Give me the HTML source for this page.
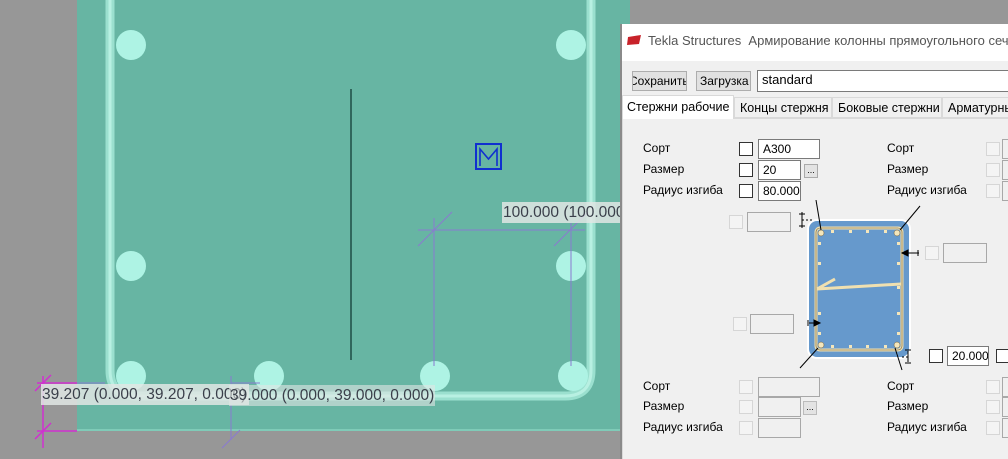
<!DOCTYPE html>
<html><head><meta charset="utf-8"><style>
*{margin:0;padding:0;box-sizing:border-box}
body{width:1008px;height:459px;overflow:hidden;background:#979797;position:relative;font-family:"Liberation Sans","DejaVu Sans",sans-serif}
.a{position:absolute;white-space:nowrap}
.lbl{position:absolute;font-size:12px;color:#000;white-space:nowrap}
.cb{position:absolute;width:14px;height:14px;border:1px solid #333;background:#fff}
.cbd{position:absolute;width:14px;height:14px;border:1px solid #d6d6d6;background:#f4f4f4}
.in{position:absolute;height:20px;border:1px solid #7a7a7a;background:#fff;font-size:12px;padding:2px 4px;line-height:14px;white-space:nowrap;overflow:hidden}
.ind{position:absolute;height:20px;border:1px solid #a8a8a8;background:#f0f0f0}
.dots{position:absolute;width:14px;height:14px;border:1px solid #aaa;background:#e3e3e3;font-size:9px;text-align:center;line-height:10px}
.coord{position:absolute;background:rgba(225,230,228,.85);color:#3a3f4a;font-size:15.5px;height:21px;line-height:21px;padding:0 1px;white-space:nowrap}
.tab{font-size:12.5px;overflow:hidden}
</style></head><body>
<svg class="a" style="left:0;top:0" width="630" height="459">
<rect x="77" y="0" width="553" height="431" fill="#67b5a3"/>
<rect x="77" y="429" width="553" height="2" fill="#7fcbb8"/>
<path d="M110 0 V370 Q110 396 136 396 H565 Q591 396 591 370 V0" fill="none" stroke="#9be0cf" stroke-width="9"/>
<path d="M110 0 V370 Q110 396 136 396 H565 Q591 396 591 370 V0" fill="none" stroke="#b8f0e2" stroke-width="3"/>
<g fill="#aef3e4">
<circle cx="131" cy="45" r="15"/><circle cx="571" cy="45" r="15"/>
<circle cx="131" cy="266" r="15"/><circle cx="571" cy="266" r="15"/>
<circle cx="131" cy="376" r="15"/><circle cx="269" cy="376" r="15"/><circle cx="435" cy="376" r="15"/><circle cx="573" cy="376" r="15"/>
</g>
<line x1="351" y1="89" x2="351" y2="360" stroke="#1f4d44" stroke-width="1.5"/>
<rect x="476" y="144" width="25" height="25" fill="none" stroke="#1030d0" stroke-width="2"/>
<path d="M480 166 V149 L488.5 159 L497 149 V166" fill="none" stroke="#1030d0" stroke-width="1.6"/>
<g stroke="#8a7ad0" stroke-width="1">
<line x1="418" y1="230" x2="585" y2="230"/><line x1="434" y1="218" x2="434" y2="366"/><line x1="571" y1="222" x2="571" y2="366"/>
<line x1="418" y1="246" x2="452" y2="212"/><line x1="554" y1="246" x2="588" y2="212"/>
<line x1="77" y1="383" x2="105" y2="383"/><line x1="231" y1="383" x2="260" y2="383"/>
<line x1="231" y1="376" x2="231" y2="440"/>
<line x1="222" y1="448" x2="240" y2="430"/>
</g>
<g stroke="#d030d0" stroke-width="1.5">
<line x1="43" y1="376" x2="43" y2="448"/>
<line x1="37" y1="383" x2="77" y2="383"/><line x1="37" y1="431" x2="77" y2="431"/>
<line x1="35" y1="391" x2="51" y2="375"/><line x1="35" y1="439" x2="51" y2="423"/>
</g>
</svg>
<div class="coord" style="left:41px;top:384px;width:208px;overflow:hidden">39.207 (0.000, 39.207, 0.000)</div>
<div class="coord" style="left:229px;top:385px;background:rgba(225,230,228,.6)">39.000 (0.000, 39.000, 0.000)</div>
<div class="coord" style="left:502px;top:202px">100.000 (100.000</div>

<div class="a" style="left:620px;top:24px;width:388px;height:435px;background:#f0f0f0;border-left:2px solid #8a8a8a"></div>
<div class="a" style="left:622px;top:24px;width:386px;height:37px;background:#fff"></div>
<svg class="a" style="left:626px;top:34px" width="16" height="12"><path d="M2 3 L15 1 L13 10 L1 11 Z" fill="#c8222a"/></svg>
<div class="lbl" style="left:648px;top:33px;font-size:13px;color:#555">Tekla Structures&nbsp; Армирование колонны прямоугольного сечения</div>
<div class="a" style="left:632px;top:71px;width:55px;height:20px;background:#e1e1e1;border:1px solid #adadad;font-size:12px;line-height:18px;overflow:hidden;text-indent:-4px">Сохранить</div>
<div class="a" style="left:696px;top:71px;width:55px;height:20px;background:#e1e1e1;border:1px solid #adadad;font-size:12px;line-height:18px;padding-left:3px">Загрузка</div>
<div class="in" style="left:757px;top:70px;width:260px;height:22px;font-size:13px">standard</div>
<div class="a" style="left:622px;top:118px;width:386px;height:1px;background:#d9d9d9"></div>
<div class="a" style="left:622px;top:119px;width:1px;height:340px;background:#d9d9d9"></div>
<div class="a tab" style="left:622px;top:95px;width:112px;height:24px;background:#fff;border:1px solid #d9d9d9;border-bottom:none;padding:4px 4px">Стержни рабочие</div>
<div class="a tab" style="left:734px;top:97px;width:98px;height:21px;background:#f0f0f0;border:1px solid #d9d9d9;padding:3px 5px">Концы стержня</div>
<div class="a tab" style="left:832px;top:97px;width:110px;height:21px;background:#f0f0f0;border:1px solid #d9d9d9;padding:3px 5px">Боковые стержни</div>
<div class="a tab" style="left:942px;top:97px;width:80px;height:21px;background:#f0f0f0;border:1px solid #d9d9d9;padding:3px 5px">Арматурны</div>

<div class="lbl" style="left:643px;top:141px">Сорт</div>
<div class="lbl" style="left:643px;top:162px">Размер</div>
<div class="lbl" style="left:643px;top:183px">Радиус изгиба</div>
<div class="cb" style="left:739px;top:142px"></div><div class="cb" style="left:739px;top:163px"></div><div class="cb" style="left:739px;top:184px"></div>
<div class="in" style="left:758px;top:139px;width:62px">A300</div>
<div class="in" style="left:758px;top:160px;width:43px">20</div>
<div class="dots" style="left:804px;top:164px">...</div>
<div class="in" style="left:758px;top:181px;width:43px">80.000</div>
<div class="lbl" style="left:887px;top:141px">Сорт</div>
<div class="lbl" style="left:887px;top:162px">Размер</div>
<div class="lbl" style="left:887px;top:183px">Радиус изгиба</div>
<div class="cbd" style="left:986px;top:142px"></div><div class="cbd" style="left:986px;top:163px"></div><div class="cbd" style="left:986px;top:184px"></div>
<div class="ind" style="left:1002px;top:139px;width:20px"></div><div class="ind" style="left:1002px;top:160px;width:20px"></div><div class="ind" style="left:1002px;top:181px;width:20px"></div>

<div class="cbd" style="left:729px;top:215px"></div><div class="ind" style="left:747px;top:212px;width:44px"></div>
<div class="cbd" style="left:925px;top:246px"></div><div class="ind" style="left:943px;top:243px;width:44px"></div>
<div class="cbd" style="left:733px;top:317px"></div><div class="ind" style="left:750px;top:314px;width:44px"></div>
<div class="cb" style="left:929px;top:349px"></div><div class="in" style="left:947px;top:346px;width:42px">20.000</div>
<div class="cb" style="left:996px;top:349px"></div>

<svg class="a" style="left:790px;top:200px" width="140" height="175">
<rect x="18" y="20" width="102" height="138" rx="9" fill="#6699cc" stroke="#fff" stroke-width="2"/>
<rect x="26" y="28" width="86" height="122" rx="4" fill="none" stroke="#f0e0b0" stroke-width="3"/>
<rect x="26" y="28" width="86" height="122" rx="4" fill="none" stroke="#6b5a3a" stroke-width="0.6"/>
<path d="M27 89 L45 79 M27 89 L111 84" stroke="#f0e0b0" stroke-width="3" fill="none"/>
<g fill="#f4e6bb" stroke="#6b5a3a" stroke-width="0.5">
<circle cx="31" cy="33" r="3"/><circle cx="107" cy="33" r="3"/><circle cx="31" cy="145" r="3"/><circle cx="107" cy="145" r="3"/>
</g>
<g fill="#f4e6bb">
<rect x="41" y="30" width="3" height="3"/><rect x="59" y="30" width="3" height="3"/><rect x="76" y="30" width="3" height="3"/><rect x="94" y="30" width="3" height="3"/>
<rect x="41" y="145" width="3" height="3"/><rect x="59" y="145" width="3" height="3"/><rect x="76" y="145" width="3" height="3"/><rect x="94" y="145" width="3" height="3"/>
<rect x="28" y="42" width="3" height="3"/><rect x="28" y="62" width="3" height="3"/><rect x="28" y="112" width="3" height="3"/><rect x="28" y="132" width="3" height="3"/>
<rect x="107" y="42" width="3" height="3"/><rect x="107" y="62" width="3" height="3"/><rect x="107" y="86" width="3" height="3"/><rect x="107" y="112" width="3" height="3"/><rect x="107" y="132" width="3" height="3"/>
</g>
<g stroke="#000" stroke-width="1" fill="none">
<line x1="26" y1="0" x2="31" y2="30"/><line x1="110" y1="30" x2="130" y2="6"/>
<line x1="28" y1="148" x2="10" y2="168"/><line x1="105" y1="148" x2="112" y2="170"/>
<path d="M12 12 V28 M9 14 H15 M9 26 H15" /><path d="M12 20 H22" stroke-dasharray="2 2"/>
<path d="M118 151 V162 M115 150 H121 M115 163 H121" /><path d="M112 157 H118" stroke-dasharray="2 2"/>
<line x1="113" y1="53" x2="129" y2="53"/><line x1="19" y1="123" x2="30" y2="123"/>
</g>
<path d="M112 53 L118 50 V56 Z M128 50 V56" fill="#000" stroke="#000"/>
<path d="M30 123 L24 120 V126 Z M18 120 V126" fill="#000" stroke="#000"/>
</svg>

<div class="cbd" style="left:739px;top:380px"></div><div class="cbd" style="left:739px;top:400px"></div><div class="cbd" style="left:739px;top:421px"></div>
<div class="ind" style="left:758px;top:377px;width:62px"></div><div class="ind" style="left:758px;top:397px;width:43px"></div><div class="dots" style="left:803px;top:401px;border-color:#bbb">...</div><div class="ind" style="left:758px;top:418px;width:43px"></div>
<div class="lbl" style="left:643px;top:379px">Сорт</div>
<div class="lbl" style="left:643px;top:399px">Размер</div>
<div class="lbl" style="left:643px;top:420px">Радиус изгиба</div>
<div class="lbl" style="left:887px;top:379px">Сорт</div>
<div class="lbl" style="left:887px;top:399px">Размер</div>
<div class="lbl" style="left:887px;top:420px">Радиус изгиба</div>
<div class="cbd" style="left:986px;top:380px"></div><div class="cbd" style="left:986px;top:400px"></div><div class="cbd" style="left:986px;top:421px"></div>
<div class="ind" style="left:1002px;top:377px;width:20px"></div><div class="ind" style="left:1002px;top:397px;width:20px"></div><div class="ind" style="left:1002px;top:418px;width:20px"></div>
</body></html>
